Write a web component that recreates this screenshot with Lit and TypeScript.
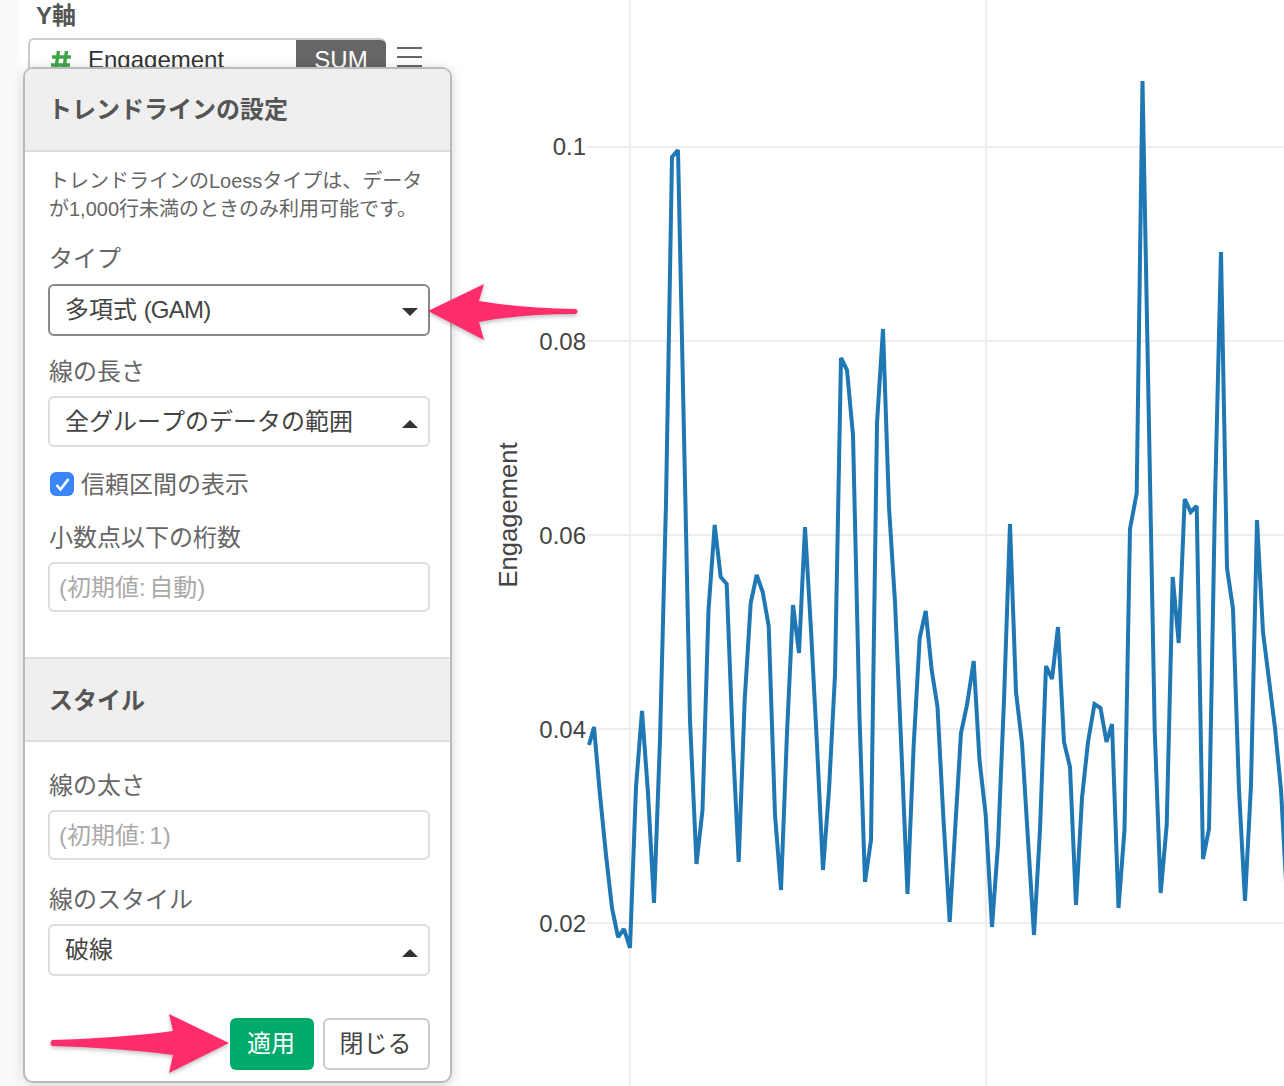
import { LitElement, html, css, svg } from "lit";
import { customElement } from "lit/decorators.js";

const LINE: [number, number][] = [
  [589,745],[594,727],[600,795],[606,855],[612,908],[618,937],[624,929],[630,948],[636,787],[642,711],
  [648,793],[654,903],[660,740],[666,503],[672,157],[678,150],[684,435],[690,720],[696.5,864],[702.5,810],
  [708.5,610],[714.7,525],[720.7,577],[726.7,584],[732.7,740],[738.7,862],[744.7,700],[750.7,603],[756.7,575],[762.7,592],
  [768.7,626],[775,815],[781,890],[787,733],[793,605],[799,653],[805,527],[811,630],[817,745],[823,870],
  [829,790],[835,675],[841,358],[847,370],[853,435],[859.5,717],[865,882],[871,840],[877,423],[883,329],
  [889,507],[895,602],[901,740],[907.5,894],[913.7,745],[919.7,638],[925.7,611],[931.7,670],[937.5,707],[943.5,820],
  [949.7,922],[955.7,820],[961,733],[967,705],[973.7,661],[979.5,760],[985.7,815],[992,927],[998,845],[1004,700],
  [1010,524],[1016,692],[1022,743],[1028,840],[1034,935],[1040,830],[1046,666],[1052,679],[1058,627],[1064,742],
  [1070,767],[1076,905],[1082,798],[1088,742],[1094.5,704],[1100.5,708],[1106.5,742],[1112,724],[1118.5,908],[1124.5,830],
  [1130,529],[1136.7,493],[1142.5,81],[1148.7,411],[1154.7,730],[1160.7,893],[1166.7,825],[1172.7,577],[1178.7,643],[1184.7,499],
  [1190.7,512],[1196.7,506],[1203,859],[1209,829],[1215,500],[1221,252],[1227,568],[1233,609],[1239,790],[1245,901],
  [1251,785],[1257,520],[1263,632],[1269,680],[1275,728],[1281,790],[1287,900],
];

const TICKS: [string, number, number][] = [["0.1",147,155],["0.08",341,350],["0.06",535,544],["0.04",729,738],["0.02",923,932]];
const VGRID = [630, 986];

@customElement("app-root")
export class AppRoot extends LitElement {
  static styles = css`
    :host {
      display: block;
      position: relative;
      width: 1284px;
      height: 1086px;
      overflow: hidden;
      background: #fff;
      font-family: "Liberation Sans", "Noto Sans CJK JP", sans-serif;
      color: #555;
      font-size: 24px;
    }
    .page { display: flex; height: 1086px; }
    .rail { width: 20px; flex: none; background: #fafafa; }
    .config { width: 460px; flex: none; padding: 0 0 0 8px; box-sizing: border-box; }
    .axis-title {
      margin: 2px 0 0 8px; font-weight: 700; font-size: 24px; line-height: 28px; color: #555;
    }
    .pill-row { display: flex; align-items: flex-start; margin-top: 8px; }
    .pill {
      width: 358px; height: 46px; box-sizing: border-box; display: flex; align-items: center;
      border: 2px solid #ccc; border-right: none; border-radius: 6px; overflow: hidden;
    }
    .hash { margin-left: 20px; width: 38px; display: flex; flex: none; margin-top: -1px; }
    .pill-name { flex: 1; color: #333; white-space: nowrap; margin-top: -2px; }
    .pill-sum {
      width: 90px; height: 46px; margin-top: -2px; background: #666; color: #fff;
      display: flex; align-items: center; justify-content: center; padding-bottom: 1px; box-sizing: border-box;
    }
    .burger { margin: 9px 0 0 11px; width: 25px; display: flex; flex-direction: column; gap: 7px; }
    .burger i { display: block; height: 2px; background: #666; }
    .chart { flex: 1; min-width: 0; display: block; height: 1086px; }

    .panel {
      position: absolute; left: 23px; top: 67px; width: 429px; height: 1016px; box-sizing: border-box;
      border: 2px solid #bbb; border-radius: 10px; background: #fff;
      box-shadow: 0 2px 12px rgba(0,0,0,.18); overflow: hidden;
      display: flex; flex-direction: column;
    }
    .head {
      flex: none; line-height: 28px;
      background: #efefef; box-sizing: border-box; display: flex; align-items: center;
      padding-left: 23px; font-weight: 700; color: #555; font-size: 24px;
    }
    .head.top { height: 83px; border-bottom: 2px solid #ddd; }
    .head.mid { height: 85px; border-top: 2px solid #ddd; border-bottom: 2px solid #ddd; margin-top: 45px; padding-left: 24px; padding-top: 2px; }
    .body { padding: 0 20px 0 23px; display: flex; flex-direction: column; flex: none; }
    .desc { margin: 15px 0 0 1px; font-size: 20px; line-height: 28px; color: #666; white-space: nowrap; }
    .desc div { height: 28px; }
    .label { line-height: 28px; height: 28px; color: #666; margin-left: 1px; white-space: nowrap; }
    .ctl {
      box-sizing: border-box; height: 52px; margin-top: 11px; border: 2px solid #ddd; border-radius: 6px;
      display: flex; align-items: center; justify-content: space-between; line-height: 28px;
      padding: 0 10px 0 15px; color: #444; background: #fff; font-kerning: none;
    }
    .ctl.focus { border-color: #888; }
    .ctl.mid { height: 51px; margin-top: 10px; }
    .ctl.last { margin-top: 10px; }
    .ctl.input { height: 50px; padding-left: 9px; padding-top: 2px; color: #aaa; margin-top: 10px; word-spacing: -3px; }
    .latin { letter-spacing: -0.8px; }
    .caret { width: 0; height: 0; border-left: 8px solid transparent; border-right: 8px solid transparent; }
    .caret.down { border-top: 8px solid #333; margin-top: 3px; }
    .caret.up { border-bottom: 8px solid #333; margin-top: 5px; }
    .check { display: flex; align-items: center; height: 28px; margin: 23px 0 0 2px; color: #666; gap: 7px; line-height: 28px; }
    .check-text { margin-top: 2px; }
    .box {
      width: 24px; height: 24px; border-radius: 6px; background: #3b86f7; flex: none;
      display: flex; align-items: center; justify-content: center;
    }
    .actions { display: flex; justify-content: flex-end; gap: 9px; margin: 42px 0 0; }
    .btn {
      height: 52px; box-sizing: border-box; border-radius: 6px; display: flex; align-items: center; justify-content: center;
      line-height: 28px; padding-right: 2px;
    }
    .btn.ok { width: 84px; background: #00aa6c; color: #fff; }
    .btn.no { width: 107px; background: #fff; border: 2px solid #ccc; color: #444; }
    .gap-22 { margin-top: 22px; }
    .gap-26 { margin-top: 26px; }
    .gap-30 { margin-top: 30px; }

    .arrow { position: absolute; filter: drop-shadow(0 2px 2px rgba(0,0,0,.25)); overflow: visible; }
    .arrow.a1 { left: 420px; top: 280px; }
    .arrow.a2 { left: 45px; top: 1010px; }
    .grid { stroke: #eee; stroke-width: 2; fill: none; }
    .trace { stroke: #1f77b4; stroke-width: 4; fill: none; stroke-linejoin: miter; stroke-miterlimit: 2; }
    .tick { font-size: 24px; fill: #444; text-anchor: end; font-family: "Liberation Sans", sans-serif; }
    .ytitle { font-size: 25.6px; fill: #444; text-anchor: middle; font-family: "Liberation Sans", sans-serif; }
  `;

  private chart() {
    const pts = LINE.map((p) => p.join(",")).join(" ");
    return html`<svg class="chart" viewBox="480 0 804 1086" width="804" height="1086">
      ${TICKS.map(([, y]) => svg`<line class="grid" x1="587" x2="1284" y1=${y} y2=${y}></line>`)}
      ${VGRID.map((x) => svg`<line class="grid" x1=${x} x2=${x} y1="0" y2="1086"></line>`)}
      ${TICKS.map(([t, , ty]) => svg`<text class="tick" x="586" y=${ty}>${t}</text>`)}
      <text class="ytitle" transform="translate(517 515) rotate(-90)">Engagement</text>
      <polyline class="trace" points=${pts}></polyline>
    </svg>`;
  }

  render() {
    return html`
      <div class="page">
        <div class="rail"></div>
        <div class="config">
          <div class="axis-title">Y軸</div>
          <div class="pill-row">
            <div class="pill">
              <span class="hash">
                <svg width="22" height="24" viewBox="0 0 22 24">
                  <path d="M8.5 2 L5.5 22 M16.5 2 L13.5 22 M2 8 H21 M1 16 H20" fill="none" stroke="#3fa648" stroke-width="3.4"></path>
                </svg>
              </span>
              <span class="pill-name">Engagement</span>
              <span class="pill-sum">SUM</span>
            </div>
            <div class="burger"><i></i><i></i><i></i></div>
          </div>
        </div>
        ${this.chart()}
      </div>

      <div class="panel">
        <div class="head top">トレンドラインの設定</div>
        <div class="body">
          <div class="desc">
            <div>トレンドラインのLoessタイプは、データ</div>
            <div>が1,000行未満のときのみ利用可能です。</div>
          </div>
          <div class="label gap-22">タイプ</div>
          <div class="ctl focus"><span>多項式 <span class="latin">(GAM)</span></span><span class="caret down"></span></div>
          <div class="label gap-22">線の長さ</div>
          <div class="ctl mid"><span>全グループのデータの範囲</span><span class="caret up"></span></div>
          <div class="check">
            <span class="box">
              <svg width="17" height="15" viewBox="0 0 17 15"><path d="M2.5 8 L6.5 12.5 L14.5 2" fill="none" stroke="#fff" stroke-width="2.6"></path></svg>
            </span>
            <span class="check-text">信頼区間の表示</span>
          </div>
          <div class="label gap-26">小数点以下の桁数</div>
          <div class="ctl input">(初期値: 自動)</div>
        </div>
        <div class="head mid">スタイル</div>
        <div class="body">
          <div class="label gap-30">線の太さ</div>
          <div class="ctl input">(初期値: 1)</div>
          <div class="label gap-26">線のスタイル</div>
          <div class="ctl last"><span>破線</span><span class="caret up"></span></div>
          <div class="actions">
            <div class="btn ok">適用</div>
            <div class="btn no">閉じる</div>
          </div>
        </div>
      </div>

      <svg class="arrow a1" width="160" height="64" viewBox="420 280 160 64">
        <path d="M428 311 L484 284 L479 301 Q520 308 576 309 Q579 311 576 314 Q520 314 479 322 L484 340 Z" fill="#ff2d6b"></path>
      </svg>
      <svg class="arrow a2" width="190" height="68" viewBox="45 1010 190 68">
        <path d="M229 1043 L169 1014 L173 1031 Q120 1038 52 1040 Q49 1043 52 1046 Q120 1048 173 1055 L169 1073 Z" fill="#ff2d6b"></path>
      </svg>
    `;
  }
}
